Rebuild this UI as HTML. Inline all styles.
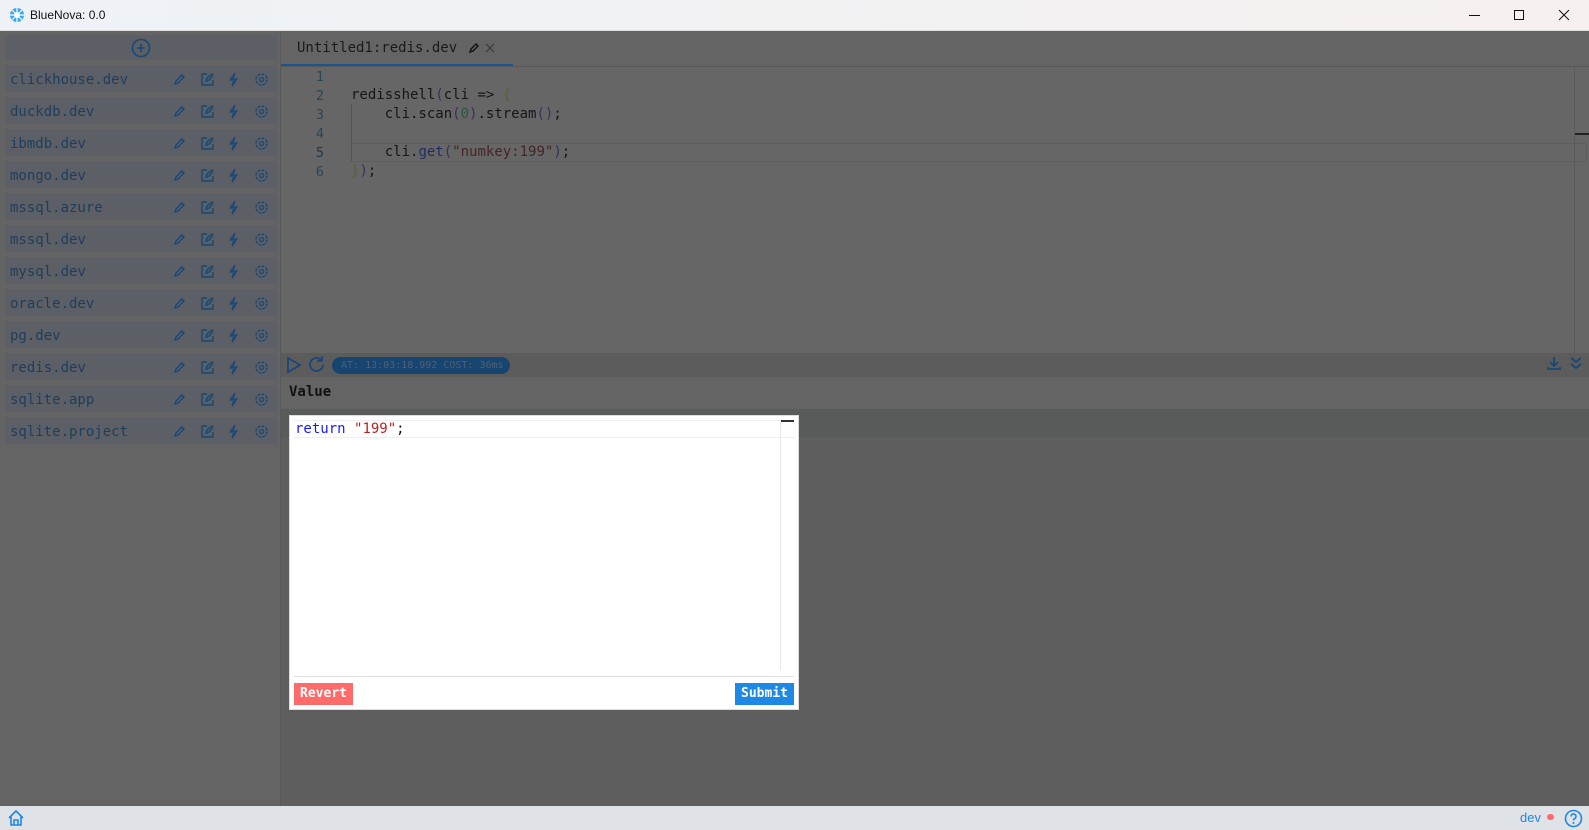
<!DOCTYPE html>
<html><head><meta charset="utf-8"><style>
*{box-sizing:border-box;margin:0;padding:0}
body{width:1589px;height:830px;overflow:hidden;background:#fff;font-family:"Liberation Sans",sans-serif;position:relative}
.abs{position:absolute}
.mono{font-family:"DejaVu Sans Mono","Liberation Mono",monospace}
.row{position:absolute;left:5px;width:272px;height:27px;background:#5c5f65}
.row span{position:absolute;left:5px;top:7px;font-size:14px;color:#1f3d5c;font-family:"DejaVu Sans Mono",monospace}
.row svg{position:absolute;top:7px}
.ln{position:absolute;left:300px;width:24px;text-align:right;font-size:13.5px;color:#28465a}
.cd{position:absolute;left:351px;font-size:14px;color:#161616;white-space:pre}
</style></head><body>
<div class="abs" style="left:0;top:0;width:1589px;height:31px;background:linear-gradient(90deg,#eef2f6,#f6f1f0);border-bottom:1px solid #ddd"></div>
<svg class="abs" style="left:9px;top:7px" width="16" height="16" viewBox="0 0 16 16"><circle cx="8" cy="8" r="7" fill="#3aa7e8"/><circle cx="8" cy="8" r="3" fill="#fff"/><path d="M8 1v4M8 11v4M1 8h4M11 8h4M3 3l3 3M10 10l3 3M13 3l-3 3M3 13l3-3" stroke="#fff" stroke-width="1.2"/></svg>
<div class="abs" style="left:30px;top:8px;font-size:12px;color:#111">BlueNova: 0.0</div>
<div class="abs" style="left:1469px;top:15px;width:11px;height:1px;background:#111"></div>
<div class="abs" style="left:1514px;top:10px;width:10px;height:10px;border:1px solid #111"></div>
<svg class="abs" style="left:1558px;top:9px" width="12" height="12"><path d="M1 1l10 10M11 1L1 11" stroke="#111" stroke-width="1"/></svg>

<div class="abs" style="left:0;top:31px;width:281px;height:775px;background:#646464;border-right:1px solid #585858"></div>
<div class="abs" style="left:5px;top:35px;width:272px;height:25px;background:#5c5f65"></div>
<svg class="abs" style="left:131px;top:38px" width="20" height="20"><circle cx="10" cy="10" r="8.5" fill="none" stroke="#1a4775" stroke-width="1.6"/><path d="M10 6v8M6 10h8" stroke="#1a4775" stroke-width="1.6"/></svg>
<div id="rows"></div>

<div class="abs" style="left:281px;top:31px;width:1308px;height:775px;background:#646464"></div>
<div class="abs mono" style="left:297px;top:40px;font-size:14px;color:#1a1a1a">Untitled1:redis.dev</div>
<svg class="abs" style="left:468px;top:42px" width="12" height="12"><path d="M2 10l1-3 5-5 2 2-5 5z" fill="none" stroke="#111" stroke-width="1.4"/></svg>
<svg class="abs" style="left:485px;top:43px" width="10" height="10"><path d="M1 1l8 8M9 1L1 9" stroke="#3a3a3a" stroke-width="1.2"/></svg>
<div class="abs" style="left:281px;top:64px;width:232px;height:3px;background:#1a5590"></div>
<div class="abs" style="left:281px;top:66px;width:1308px;height:1px;background:#585858"></div>
<div class="abs" style="left:281px;top:67px;width:1308px;height:286px;background:#666"></div>
<div class="abs" style="left:351px;top:143px;width:1236px;height:19px;border:1px solid #5e5e5e"></div>
<div class="abs" style="left:351px;top:104px;width:1px;height:57px;background:#535353"></div>
<div class="abs" style="left:1574px;top:67px;width:1px;height:286px;background:#5a5a5a"></div>
<div class="abs" style="left:1575px;top:133px;width:14px;height:2px;background:#222"></div>
<div class="ln mono" style="top:69px">1</div>
<div class="ln mono" style="top:88px">2</div>
<div class="ln mono" style="top:107px">3</div>
<div class="ln mono" style="top:126px">4</div>
<div class="ln mono" style="top:145px;color:#1a3a50">5</div>
<div class="ln mono" style="top:164px">6</div>
<div class="cd mono" style="top:87px">redisshell<span style="color:#33335e">(</span>cli =&gt; <span style="color:#55633a">{</span></div>
<div class="cd mono" style="top:106px">    cli.scan<span style="color:#33335e">(</span><span style="color:#2a5544">0</span><span style="color:#33335e">)</span>.stream<span style="color:#33335e">()</span>;</div>
<div class="cd mono" style="top:144px">    cli.<span style="color:#1f2c62">get</span><span style="color:#33335e">(</span><span style="color:#452626">"numkey:199"</span><span style="color:#33335e">)</span>;</div>
<div class="cd mono" style="top:163px"><span style="color:#55633a">}</span><span style="color:#33335e">)</span>;</div>

<div class="abs" style="left:281px;top:353px;width:1308px;height:24px;background:#5c5c5c"></div>
<svg class="abs" style="left:286px;top:356px" width="16" height="18"><path d="M2 2l12 7-12 7z" fill="none" stroke="#1a4775" stroke-width="1.8"/></svg>
<svg class="abs" style="left:307px;top:355px" width="19" height="19"><path d="M16 9.5a6.5 6.5 0 1 1-2-4.7" fill="none" stroke="#1a4775" stroke-width="1.8"/><path d="M15 1v5h-5" fill="none" stroke="#1a4775" stroke-width="1.8"/></svg>
<div class="abs mono" style="left:332px;top:357px;height:17px;width:178px;border-radius:9px;background:#184470;color:#4c6175;font-size:10px;line-height:17px;padding-left:9px">AT: 13:03:18.992 COST: 36ms</div>
<svg class="abs" style="left:1546px;top:355px" width="16" height="16"><path d="M8 2v9M4 7l4 4 4-4M2 12v2h12v-2" fill="none" stroke="#1a4775" stroke-width="1.8"/></svg>
<svg class="abs" style="left:1569px;top:355px" width="14" height="16"><path d="M2 3l5 4 5-4M2 9l5 4 5-4" fill="none" stroke="#1a4775" stroke-width="1.8"/></svg>
<div class="abs" style="left:281px;top:377px;width:1308px;height:32px;background:#646464"></div>
<div class="abs mono" style="left:289px;top:384px;font-size:14px;font-weight:bold;color:#111">Value</div>
<div class="abs" style="left:281px;top:409px;width:1308px;height:28px;background:#595a5a"></div>
<div class="abs" style="left:281px;top:437px;width:1308px;height:369px;background:#5e5e5e"></div>

<div class="abs" style="left:289px;top:415px;width:510px;height:295px;background:#fff;border:1px solid #ddd"></div>
<div class="abs" style="left:294px;top:420px;width:500px;height:18px;border:1px solid #eee;border-width:1px 0"></div>
<div class="abs" style="left:780px;top:420px;width:1px;height:250px;background:#e8e8e8"></div>
<div class="abs" style="left:781px;top:420px;width:13px;height:2px;background:#333"></div>
<div class="abs mono" style="left:295px;top:421px;font-size:14px;white-space:pre"><span style="color:#1a1aff">return</span> <span style="color:#b22">"199"</span><span style="color:#111">;</span></div>
<div class="abs" style="left:294px;top:676px;width:500px;height:1px;background:#e0e0e0"></div>
<div class="abs mono" style="left:294px;top:683px;width:59px;height:22px;background:#ff6b6b;color:#fff;font-size:13px;font-weight:bold;line-height:22px;text-align:center">Revert</div>
<div class="abs mono" style="left:735px;top:683px;width:59px;height:22px;background:#1e88e5;color:#fff;font-size:13px;font-weight:bold;line-height:22px;text-align:center">Submit</div>

<div class="abs" style="left:0;top:806px;width:1589px;height:24px;background:#dfe2e7"></div>
<svg class="abs" style="left:7px;top:809px" width="18" height="18"><path d="M2 9l7-7 7 7M4 7v9h10V7M7 16v-5h4v5" fill="none" stroke="#1e88e5" stroke-width="1.6"/></svg>
<div class="abs" style="left:1520px;top:810px;font-size:13px;color:#1e88e5">dev</div>
<div class="abs" style="left:1547px;top:814px;width:7px;height:6px;border-radius:3px;background:#ff6b6b"></div>
<svg class="abs" style="left:1564px;top:809px" width="19" height="19"><circle cx="9.5" cy="9.5" r="8" fill="none" stroke="#1e88e5" stroke-width="1.6"/><path d="M7 7.5a2.5 2.5 0 1 1 3.5 2.2c-.8.4-1 .8-1 1.8" fill="none" stroke="#1e88e5" stroke-width="1.6"/><circle cx="9.5" cy="14" r="1" fill="#1e88e5"/></svg>

<script>
var names=["clickhouse.dev","duckdb.dev","ibmdb.dev","mongo.dev","mssql.azure","mssql.dev","mysql.dev","oracle.dev","pg.dev","redis.dev","sqlite.app","sqlite.project"];
var c="#1a4775",h="";
names.forEach(function(n,i){var t=65+32*i;
h+='<div class="row" style="top:'+t+'px"><span>'+n+'</span>'+
'<svg style="left:167px" width="15" height="15"><path d="M3 12l1-3 6-6 2 2-6 6z" fill="none" stroke="'+c+'" stroke-width="1.4"/></svg>'+
'<svg style="left:195px" width="15" height="15"><path d="M7 2H2v11h11V8M6 9l1-3 5-4 1 1-4 5z" fill="none" stroke="'+c+'" stroke-width="1.4"/></svg>'+
'<svg style="left:221px" width="15" height="15"><path d="M9 1L4 8h4l-2 6 5-7H7z" fill="none" stroke="'+c+'" stroke-width="1.3"/></svg>'+
'<svg style="left:249px" width="15" height="15"><circle cx="7.5" cy="7.5" r="5.5" fill="none" stroke="'+c+'" stroke-width="1.4" stroke-dasharray="3 1.3"/><circle cx="7.5" cy="7.5" r="2" fill="none" stroke="'+c+'" stroke-width="1.3"/></svg></div>';});
document.getElementById("rows").innerHTML=h;
</script>
</body></html>
